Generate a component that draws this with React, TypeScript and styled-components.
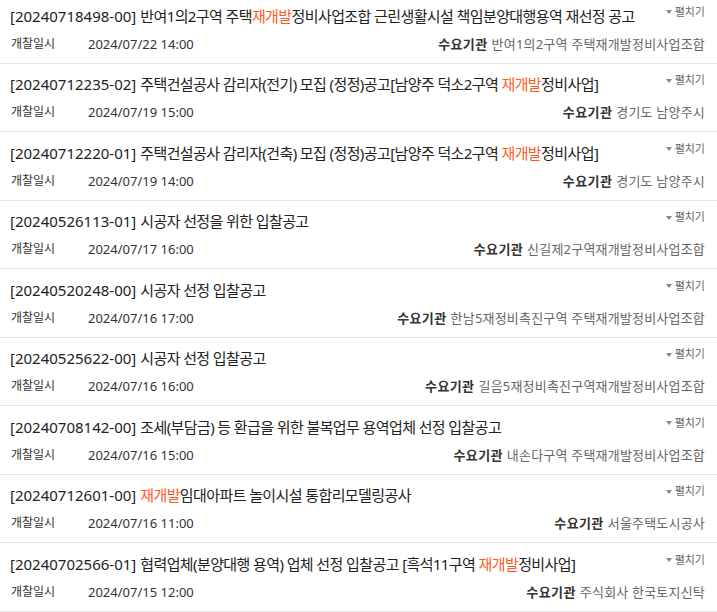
import { createGlobalStyle, styled } from "styled-components";

type Notice = {
  no: string;
  title: string;
  date: string;
  agency: string;
};

const notices: Notice[] = [
  {
    no: "20240718498-00",
    title: "반여1의2구역 주택재개발정비사업조합 근린생활시설 책임분양대행용역 재선정 공고",
    date: "2024/07/22 14:00",
    agency: "반여1의2구역 주택재개발정비사업조합",
  },
  {
    no: "20240712235-02",
    title: "주택건설공사 감리자(전기) 모집 (정정)공고[남양주 덕소2구역 재개발정비사업]",
    date: "2024/07/19 15:00",
    agency: "경기도 남양주시",
  },
  {
    no: "20240712220-01",
    title: "주택건설공사 감리자(건축) 모집 (정정)공고[남양주 덕소2구역 재개발정비사업]",
    date: "2024/07/19 14:00",
    agency: "경기도 남양주시",
  },
  {
    no: "20240526113-01",
    title: "시공자 선정을 위한 입찰공고",
    date: "2024/07/17 16:00",
    agency: "신길제2구역재개발정비사업조합",
  },
  {
    no: "20240520248-00",
    title: "시공자 선정 입찰공고",
    date: "2024/07/16 17:00",
    agency: "한남5재정비촉진구역 주택재개발정비사업조합",
  },
  {
    no: "20240525622-00",
    title: "시공자 선정 입찰공고",
    date: "2024/07/16 16:00",
    agency: "길음5재정비촉진구역재개발정비사업조합",
  },
  {
    no: "20240708142-00",
    title: "조세(부담금) 등 환급을 위한 불복업무 용역업체 선정 입찰공고",
    date: "2024/07/16 15:00",
    agency: "내손다구역 주택재개발정비사업조합",
  },
  {
    no: "20240712601-00",
    title: "재개발임대아파트 놀이시설 통합리모델링공사",
    date: "2024/07/16 11:00",
    agency: "서울주택도시공사",
  },
  {
    no: "20240702566-01",
    title: "협력업체(분양대행 용역) 업체 선정 입찰공고 [흑석11구역 재개발정비사업]",
    date: "2024/07/15 12:00",
    agency: "주식회사 한국토지신탁",
  },
];

const KEYWORD = "재개발";

const GlobalStyle = createGlobalStyle`
  html, body {
    margin: 0;
    padding: 0;
    background: #fff;
  }
  body {
    font-family: "Noto Sans", "Noto Sans CJK KR", sans-serif;
    color: #222;
    overflow: hidden;
  }
`;

const List = styled.ul`
  list-style: none;
  margin: -5px 0 0;
  padding: 0;
`;

const Item = styled.li`
  display: flex;
  flex-direction: column;
  gap: 9px;
  padding: 10.5px 12px 10px 10px;
  border-bottom: 1px solid #e6e6e6;
`;

const Head = styled.div`
  display: flex;
  align-items: flex-start;
  justify-content: space-between;
  height: 20px;
`;

const Title = styled.h3`
  margin: 0;
  height: 20px;
  font-size: 15px;
  font-weight: 400;
  line-height: 20px;
  letter-spacing: -0.6px;
  color: #222;
  white-space: nowrap;
`;

const BidNo = styled.span`
  letter-spacing: 0;
  margin-right: 4px;
`;

const Mark = styled.span`
  color: #ff5b1f;
`;

const Toggle = styled.button`
  display: flex;
  align-items: center;
  gap: 3px;
  margin: -3px 0 0;
  padding: 0;
  border: 0;
  background: none;
  font-family: inherit;
  font-size: 11px;
  line-height: 18px;
  color: #666;
  cursor: pointer;
`;

const Caret = styled.span`
  width: 0;
  height: 0;
  border-left: 3.5px solid transparent;
  border-right: 3.5px solid transparent;
  border-top: 4px solid #888;
  margin-top: 1px;
`;

const Meta = styled.div`
  display: flex;
  align-items: center;
  height: 18px;
  line-height: 18px;
`;

const Label = styled.span`
  width: 77px;
  flex: none;
  padding-left: 1px;
  font-size: 12px;
  color: #333;
`;

const DateText = styled.span`
  font-size: 13px;
  color: #333;
`;

const Agency = styled.span`
  margin-left: auto;
  white-space: nowrap;
  font-size: 13px;
  letter-spacing: 0.2px;
  color: #666;
`;

const AgencyLabel = styled.b`
  font-size: 13px;
  font-weight: 700;
  letter-spacing: 0.4px;
  color: #333;
  margin-right: 4px;
`;

function HighlightedTitle({ text }: { text: string }) {
  const parts = text.split(KEYWORD);
  return (
    <>
      {parts.map((part, i) => (
        <span key={i}>
          {i > 0 && <Mark>{KEYWORD}</Mark>}
          {part}
        </span>
      ))}
    </>
  );
}

function NoticeRow({ notice }: { notice: Notice }) {
  return (
    <Item>
      <Head>
        <Title>
          <BidNo>[{notice.no}]</BidNo>
          <HighlightedTitle text={notice.title} />
        </Title>
        <Toggle type="button">
          <Caret />
          펼치기
        </Toggle>
      </Head>
      <Meta>
        <Label>개찰일시</Label>
        <DateText>{notice.date}</DateText>
        <Agency>
          <AgencyLabel>수요기관</AgencyLabel>
          {notice.agency}
        </Agency>
      </Meta>
    </Item>
  );
}

export default function App() {
  return (
    <>
      <GlobalStyle />
      <List>
        {notices.map((n) => (
          <NoticeRow key={n.no} notice={n} />
        ))}
      </List>
    </>
  );
}
